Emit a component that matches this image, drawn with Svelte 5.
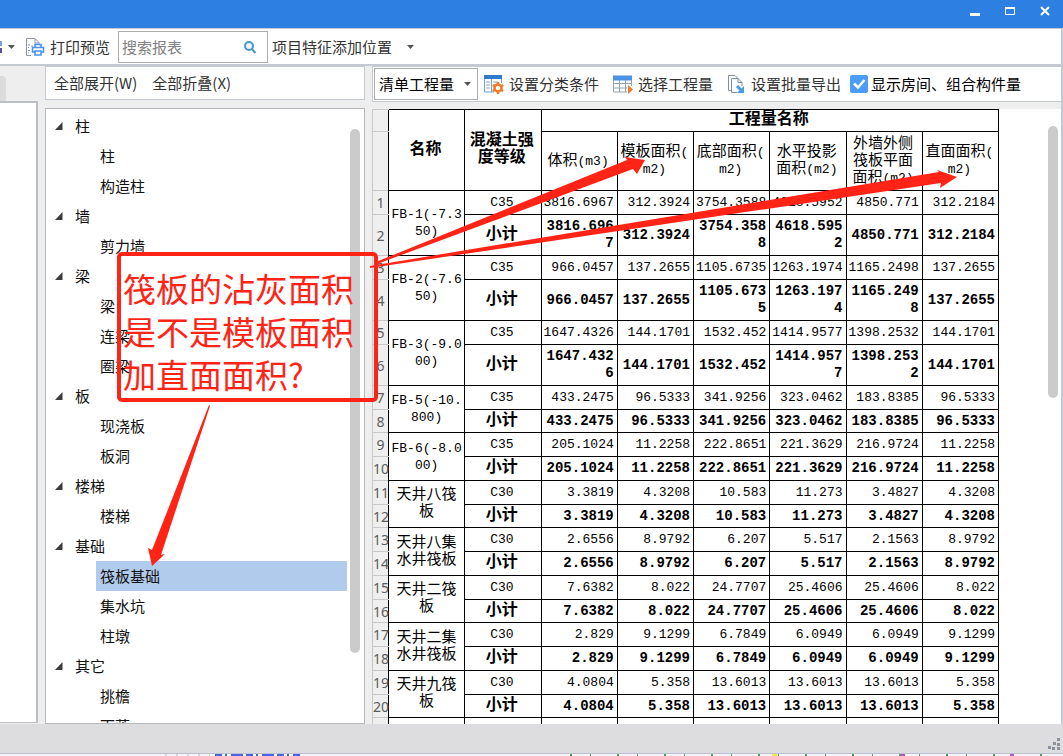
<script>
  let search = $state('');
  let quantityType = $state('清单工程量');
  let showRooms = $state(true);
  let selected = $state('筏板基础');

  const tree = [
    { name: '柱', children: ['柱', '构造柱'] },
    { name: '墙', children: ['剪力墙'] },
    { name: '梁', children: ['梁', '连梁', '圈梁'] },
    { name: '板', children: ['现浇板', '板洞'] },
    { name: '楼梯', children: ['楼梯'] },
    { name: '基础', children: ['筏板基础', '集水坑', '柱墩'] },
    { name: '其它', children: ['挑檐', '雨蓬'] }
  ];

  const columns = ['体积(m3)', '模板面积(m2)', '底部面积(m2)', '水平投影面积(m2)', '外墙外侧筏板平面面积(m2)', '直面面积(m2)'];

  const items = [
    { name: 'FB-1(-7.350)', grade: 'C35', values: ['3816.6967', '312.3924', '3754.3588', '4618.5952', '4850.771', '312.2184'] },
    { name: 'FB-2(-7.650)', grade: 'C35', values: ['966.0457', '137.2655', '1105.6735', '1263.1974', '1165.2498', '137.2655'] },
    { name: 'FB-3(-9.000)', grade: 'C35', values: ['1647.4326', '144.1701', '1532.452', '1414.9577', '1398.2532', '144.1701'] },
    { name: 'FB-5(-10.800)', grade: 'C35', values: ['433.2475', '96.5333', '341.9256', '323.0462', '183.8385', '96.5333'] },
    { name: 'FB-6(-8.000)', grade: 'C35', values: ['205.1024', '11.2258', '222.8651', '221.3629', '216.9724', '11.2258'] },
    { name: '天井八筏板', grade: 'C30', values: ['3.3819', '4.3208', '10.583', '11.273', '3.4827', '4.3208'] },
    { name: '天井八集水井筏板', grade: 'C30', values: ['2.6556', '8.9792', '6.207', '5.517', '2.1563', '8.9792'] },
    { name: '天井二筏板', grade: 'C30', values: ['7.6382', '8.022', '24.7707', '25.4606', '25.4606', '8.022'] },
    { name: '天井二集水井筏板', grade: 'C30', values: ['2.829', '9.1299', '6.7849', '6.0949', '6.0949', '9.1299'] },
    { name: '天井九筏板', grade: 'C30', values: ['4.0804', '5.358', '13.6013', '13.6013', '13.6013', '5.358'] }
  ];

  // a subtotal longer than eight characters needs a second line
  const isTall = (item) => item.values.some((v) => v.length > 8);

  // splits latin runs from chinese ones, they are set in different sizes
  const runs = (text) => text.split(/([\x20-\x7e]+)/).filter(Boolean);
  const isLatin = (text) => /^[\x20-\x7e]/.test(text);
</script>

{#snippet mixed(text)}
  {#each runs(text) as run}<span class:latin={isLatin(run)}>{run}</span>{/each}
{/snippet}

{#snippet caret()}
  <svg class="caret" viewBox="0 0 7 4" aria-hidden="true"><path d="M0 0h7L3.5 4z" fill="#555" /></svg>
{/snippet}

<div class="window">
  <header class="titlebar">
    <button aria-label="最小化">
      <svg viewBox="0 0 12 12"><path d="M1 9.500h10" stroke="#fff" stroke-width="3" /></svg>
    </button>
    <button aria-label="最大化">
      <svg viewBox="0 0 12 12"><path d="M1.500 2.500h9v7h-9z" fill="none" stroke="#fff" /><path d="M1 3h10" stroke="#fff" stroke-width="2" /></svg>
    </button>
    <button aria-label="关闭">
      <svg viewBox="0 0 12 12"><path d="M2 2l8 8M10 2l-8 8" stroke="#fff" stroke-width="2" /></svg>
    </button>
  </header>

  <div class="toolbar">
    <button class="cut" aria-label="更多">
      <svg class="sliver" viewBox="0 0 2 14" aria-hidden="true"><path d="M0 1h2v5H0z" fill="#7ba0dd" /><path d="M0 8h2v5H0z" fill="#55529b" /></svg>
      {@render caret()}
    </button>
    <button class="tool print">
      <svg class="icon" viewBox="0 0 20 20" fill="none" aria-hidden="true">
        <path d="M6 18.500H1.500v-17h8.500l4 4V8M10 1.500V6h4" stroke="#8b98a3" />
        <path d="M3 8h2M3 10.500h1M6 9h2M3 13.500h2M3 16h1" stroke="#8b98a3" />
        <path d="M10 10V7.500h6V10M10 15H7.500v-4.500h11V15H16M10 14h6v4h-6z" stroke="#4a93ea" stroke-width="1.600" />
      </svg>
      打印预览
    </button>
    <div class="search">
      <input type="text" placeholder="搜索报表" aria-label="搜索报表" bind:value={search} />
      <svg class="lens" viewBox="0 0 14 14" aria-hidden="true">
        <circle cx="6" cy="6" r="4" fill="#eaf6fc" stroke="#4599cc" stroke-width="2" />
        <path d="M9 9l3.500 4" stroke="#4599cc" stroke-width="2" />
      </svg>
    </div>
    <button class="tool place">项目特征添加位置 {@render caret()}</button>
  </div>

  <main>
    <aside class="edge">
      <div class="tab"></div>
      <div class="blank"></div>
    </aside>

    <section class="side">
      <div class="bar">
        <button class="tool">全部展开(W)</button>
        <button class="tool">全部折叠(X)</button>
      </div>
      <nav class="tree">
        <ul>
          {#each tree as group}
            <li>
              <button class="group">
                <svg viewBox="0 0 8 8" aria-hidden="true"><path d="M7.500 0v8H0z" fill="#3c3c3c" /></svg>
                {group.name}
              </button>
              <ul>
                {#each group.children as child}
                  <li>
                    <button class="leaf" class:selected={child === selected} onclick={() => (selected = child)}>{child}</button>
                  </li>
                {/each}
              </ul>
            </li>
          {/each}
        </ul>
        <div class="thumb"></div>
      </nav>
    </section>

    <section class="report">
      <div class="bar options">
        <div class="pick">
          <select aria-label="工程量类型" bind:value={quantityType}>
            <option>清单工程量</option>
            <option>定额工程量</option>
          </select>
          {@render caret()}
        </div>
        <button class="tool">
          <svg class="icon" viewBox="0 0 20 20" fill="none" aria-hidden="true">
            <path d="M.5 4v14H10M7.500 4v14M17.500 4v5" stroke="#6ba3e0" />
            <path d="M0 3h18" stroke="#2f7bd0" stroke-width="4" />
            <path d="M2 8h4M2 11h4M2 14h4M9 8h5M9 11h2" stroke="#9aa6b0" />
            <circle cx="14" cy="14" r="3.500" stroke="#f07b26" stroke-width="2.500" />
            <path d="M14 8v3M14 17v3M8.800 11l2.600 1.500M16.600 15.500l2.600 1.500M8.800 17l2.600-1.500M16.600 12.500l2.600-1.500" stroke="#f07b26" stroke-width="2.500" />
          </svg>
          设置分类条件
        </button>
        <button class="tool">
          <svg class="icon" viewBox="0 0 20 20" fill="none" aria-hidden="true">
            <path d="M.5 4v14H14M18.500 4v8M0 9.500h18M0 14h14M6.500 5v13M12.500 5v13" stroke="#93a3b0" />
            <path d="M0 4h19" stroke="#4a93e4" stroke-width="5" />
            <path d="M15 11l5 4.500-5 4.500z" fill="#f07b26" />
          </svg>
          选择工程量
        </button>
        <button class="tool export">
          <svg class="icon" viewBox="0 0 20 20" fill="none" aria-hidden="true">
            <path d="M4 16.500H1.500v-15H8l3 3M4.500 4.500H11l4 4V12M4.500 4.500v14H10M11 4.500v4h4" stroke="#7f8f9b" />
            <path d="M10 12l5 5" stroke="#4a9be4" stroke-width="3" />
            <path d="M17 12v7h-7z" fill="#4a9be4" />
          </svg>
          设置批量导出
        </button>
        <label class="check">
          <input type="checkbox" bind:checked={showRooms} />
          <svg viewBox="0 0 18 18" aria-hidden="true"><path d="M4 8.500l4 4L14.500 5" fill="none" stroke="#fff" stroke-width="2.500" /></svg>
          <span>显示房间、组合构件量</span>
        </label>
      </div>

      <div class="sheet">
        <table>
          <thead>
            <tr class="head-top">
              <th class="num"></th>
              <th rowspan="2">名称</th>
              <th rowspan="2">混凝土强度等级</th>
              <th colspan="6">工程量名称</th>
            </tr>
            <tr class="head-sub">
              <th class="num"></th>
              {#each columns as column}
                <th class="sub">{@render mixed(column)}</th>
              {/each}
            </tr>
          </thead>
          <tbody>
            {#each items as item, i}
              <tr>
                <th class="num">{i * 2 + 1}</th>
                <td class="name" rowspan="2">{@render mixed(item.name)}</td>
                <td class="grade">{item.grade}</td>
                {#each item.values as value}<td>{value}</td>{/each}
              </tr>
              <tr class="subtotal" class:tall={isTall(item)}>
                <th class="num">{i * 2 + 2}</th>
                <td class="grade">小计</td>
                {#each item.values as value}<td>{value}</td>{/each}
              </tr>
            {/each}
            <tr>
              <th class="num"></th>
              <td></td>
              <td></td>
              {#each columns as _}<td></td>{/each}
            </tr>
          </tbody>
        </table>
        <div class="thumb"></div>
      </div>
    </section>
  </main>

  <footer>
    <svg class="grip" viewBox="0 0 12 12" aria-hidden="true">
      <path d="M9 0h3v3H9zM5 4h3v3H5zM9 5h3v3H9zM0 8h3v3H0zM4 9h3v3H4zM9 9h3v3H9z" fill="#8b929b" />
    </svg>
  </footer>
  <div class="behind">
    <svg viewBox="0 0 1063 2" aria-hidden="true">
      <path d="M215 1h85" stroke="#4a62e8" stroke-width="2" stroke-dasharray="7 3 2 4 12 3" />
      <path d="M165 1h45" stroke="#b5b8be" stroke-width="1" stroke-dasharray="2 9" />
      <path d="M570 1h490" stroke="#5a9a62" stroke-width="2" stroke-dasharray="2 18 1 26" />
      <path d="M772 1h5" stroke="#f0ec30" stroke-width="2" />
      <path d="M901 1h4M1010 1h4" stroke="#c04ac8" stroke-width="2" />
    </svg>
  </div>

  <!-- review note pinned over the window -->
  <svg class="arrows" viewBox="0 0 1063 756" aria-hidden="true">
    <path d="M376 262L627 160l-2-3 20 3-8 14-4-5L377 264z" />
    <path d="M370 266L939 172l-2-2 20 7-17 11 1-5L370 268z" />
    <path d="M209 405L152 550l-4-2 4 18 13-12-4 1L210 406z" />
  </svg>
  <p class="note">筏板的沾灰面积是不是模板面积加直面面积?</p>
</div>

<style>
  :global(body) {
    margin: 0;
  }

  .window, .window * {
    box-sizing: border-box;
  }

  .window {
    position: relative;
    display: flex;
    flex-direction: column;
    height: 100vh;
    overflow: hidden;
    background: #eeeeef;
    color: #1c1c1c;
    font: 15px/20px "Noto Sans CJK SC", sans-serif;
  }

  button, input, select {
    font: inherit;
    color: inherit;
    margin: 0;
    padding: 0;
    border: 0;
    background: none;
  }

  button {
    white-space: nowrap;
  }

  ul {
    list-style: none;
    margin: 0;
    padding: 0;
  }

  svg {
    display: block;
    flex: none;
  }

  .titlebar {
    flex: none;
    height: 28px;
    display: flex;
    justify-content: flex-end;
    gap: 23px;
    padding: 5px 12px 0 0;
    background: #2d7fe1;
  }

  .titlebar button {
    height: 12px;
  }

  .titlebar svg {
    width: 12px;
    height: 12px;
  }

  .toolbar {
    flex: none;
    height: 38px;
    display: flex;
    align-items: center;
    background: #fff;
    border: solid #c5cad1;
    border-width: 1px 2px 2px 0;
  }

  .cut {
    display: flex;
    align-items: center;
    gap: 6px;
    width: 25px;
  }

  .sliver {
    width: 2px;
    height: 14px;
  }

  .caret {
    width: 7px;
    height: 4px;
  }

  .tool {
    display: flex;
    align-items: center;
    gap: 5px;
    color: #333;
  }

  .icon {
    width: 20px;
    height: 20px;
  }

  .print {
    margin-right: 8px;
  }

  .search {
    display: flex;
    align-items: center;
    width: 150px;
    height: 32px;
    padding: 0 10px 0 3px;
    border: 1px solid #adadad;
    margin-right: 4px;
  }

  .search input {
    flex: 1;
    min-width: 0;
    outline: 0;
  }

  .search input::placeholder {
    color: #808080;
    opacity: 1;
  }

  .lens {
    width: 14px;
    height: 14px;
  }

  .place {
    gap: 15px;
  }

  main {
    flex: 1;
    min-height: 0;
    display: flex;
    gap: 7px;
    border-right: 2px solid #c5cad1;
  }

  .edge {
    flex: none;
    width: 38px;
    display: flex;
    flex-direction: column;
    padding: 10px 0 1px;
  }

  .tab {
    width: 6px;
    height: 25px;
    background: #dcdcdd;
    border-radius: 0 4px 0 0;
  }

  .blank {
    flex: 1;
    background: #fff;
    border: solid #bcc0c5;
    border-width: 2px 2px 1px 0;
  }

  .side {
    flex: none;
    width: 320px;
    display: flex;
    flex-direction: column;
    gap: 8px;
  }

  .bar {
    flex: none;
    display: flex;
    align-items: center;
    gap: 15px;
    height: 34px;
    padding: 0 8px;
    background: #fff;
    border: 1px solid #c5cad1;
  }

  .tree {
    flex: 1;
    min-height: 0;
    position: relative;
    overflow: hidden;
    padding: 2px 17px 0 8px;
    background: #fff;
    border: 1px solid #b4b8bd;
  }

  .group, .leaf {
    display: flex;
    align-items: center;
    height: 30px;
    color: #111;
  }

  .group {
    gap: 12px;
  }

  .group svg {
    width: 8px;
    height: 8px;
    margin-left: 1px;
  }

  .tree ul ul {
    padding-left: 42px;
  }

  .leaf {
    width: 100%;
    padding-left: 4px;
  }

  .selected {
    background: #b1cbec;
  }

  .thumb {
    position: absolute;
    width: 10px;
    border-radius: 5px;
    background: #cbcbcb;
  }

  .tree .thumb {
    top: 20px;
    right: 4px;
    height: 524px;
  }

  .report {
    flex: 1;
    min-width: 0;
    display: flex;
    flex-direction: column;
    gap: 7px;
  }

  .options {
    height: 36px;
    gap: 14px;
    padding: 0 1px;
    border-right: 0;
  }

  .pick {
    display: flex;
    align-items: center;
    width: 104px;
    height: 32px;
    border: 1px solid #adadad;
    margin-right: -8px;
    padding-right: 6px;
  }

  .pick select {
    flex: 1;
    min-width: 0;
    height: 30px;
    padding-left: 4px;
    appearance: none;
    color: #000;
    outline: 0;
  }

  .export {
    gap: 4px;
  }

  .check {
    display: grid;
    grid-template-columns: 18px auto;
    align-items: center;
    column-gap: 3px;
    margin-left: -5px;
    color: #000;
    white-space: nowrap;
  }

  .check input, .check svg {
    grid-area: 1 / 1;
    width: 18px;
    height: 18px;
  }

  .check input {
    appearance: none;
    border: 1px solid #4c9df7;
    border-radius: 2px;
  }

  .check input:checked {
    background: #4c9df7;
  }

  .check svg {
    pointer-events: none;
  }

  .sheet {
    flex: 1;
    min-height: 0;
    position: relative;
    overflow: hidden;
    background: #fff;
  }

  .sheet .thumb {
    top: 17px;
    right: 3px;
    height: 272px;
  }

  table {
    width: 627px;
    table-layout: fixed;
    border-collapse: collapse;
    color: #000;
    font: 13px/17px "Liberation Mono", "Noto Sans CJK SC", monospace;
  }

  th, td {
    height: 24px;
    padding: 0 3px 0 1px;
    border: 1px solid #000;
    text-align: right;
    word-break: break-all;
    line-break: anywhere;
  }

  thead th {
    text-align: center;
    font-size: 16px;
  }

  .head-top th {
    height: 22px;
  }

  .head-sub th {
    height: 59px;
  }

  thead .sub {
    font-size: 15px;
    font-weight: 400;
  }

  .name {
    padding: 0 2px;
    font-size: 15px;
    text-align: center;
  }

  .latin {
    font-size: 13px;
  }

  .grade {
    text-align: center;
  }

  .subtotal td {
    font-size: 14px;
    font-weight: 700;
  }

  .subtotal .grade {
    font-size: 16px;
  }

  tbody tr:nth-child(4n) > * {
    height: 23px;
  }

  tbody tr.tall.subtotal > * {
    height: 41px;
  }

  table .num {
    width: 16px;
    padding: 0;
    background: #efefef;
    border: solid #c8c8c8;
    border-width: 1px 0 1px 1px;
    color: #5c5c5c;
    font: 14px/17px "Noto Sans", sans-serif;
    text-align: center;
    white-space: nowrap;
  }

  footer {
    flex: none;
    height: 30px;
    display: flex;
    align-items: flex-end;
    justify-content: flex-end;
    padding: 0 3px 3px 0;
    background: #dddddf;
    border-bottom: 1px solid #b9c0d2;
  }

  .grip {
    width: 12px;
    height: 12px;
  }

  .behind {
    flex: none;
    height: 2px;
    background: #f5f6f9;
  }

  .behind svg {
    width: 1063px;
    height: 2px;
  }

  .arrows {
    position: absolute;
    top: 0;
    left: 0;
    width: 1063px;
    height: 756px;
    fill: #ff2416;
    pointer-events: none;
  }

  .note {
    position: absolute;
    top: 252px;
    left: 117px;
    width: 261px;
    height: 150px;
    margin: 0;
    padding: 11px 17px 0 2px;
    border: 4px solid #ff2416;
    border-radius: 5px;
    color: #ff2416;
    font-size: 33px;
    line-height: 43px;
    word-break: break-all;
  }
</style>
